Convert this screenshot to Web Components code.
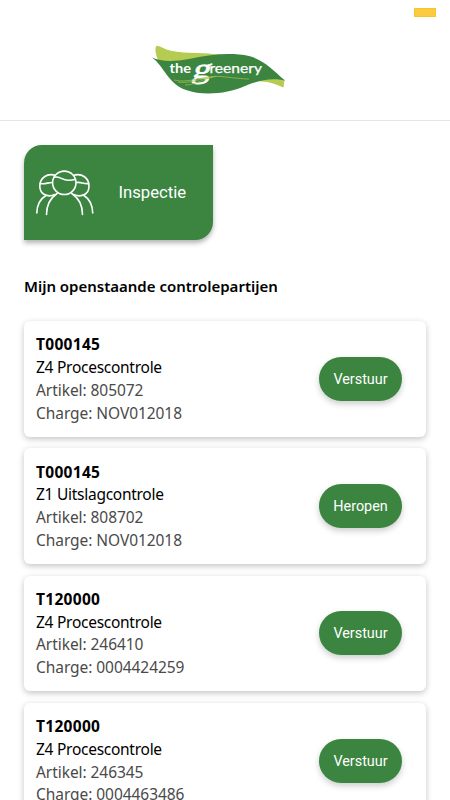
<!DOCTYPE html>
<html lang="nl">
<head>
<meta charset="utf-8">
<meta name="viewport" content="width=device-width, initial-scale=1">
<title>The Greenery</title>
<style>
    html, body {
        margin: 0;
        height: 100%;
        overflow: hidden;
        background: #fff;
        font-family: "Noto Sans", sans-serif;
        --green: #3b8541;
    }
</style>
</head>
<body>
<greenery-app>
    <app-header slot="header"></app-header>
    <menu-tile>Inspectie</menu-tile>
    <section-title>Mijn openstaande controlepartijen</section-title>
    <party-list>
        <party-card code="T000145" artikel="805072" charge="NOV012018" action="Verstuur">Z4 Procescontrole</party-card>
        <party-card code="T000145" artikel="808702" charge="NOV012018" action="Heropen">Z1 Uitslagcontrole</party-card>
        <party-card code="T120000" artikel="246410" charge="0004424259" action="Verstuur">Z4 Procescontrole</party-card>
        <party-card code="T120000" artikel="246345" charge="0004463486" action="Verstuur">Z4 Procescontrole</party-card>
    </party-list>
</greenery-app>

<script>
class GreeneryApp extends HTMLElement {
    connectedCallback() {
        this.attachShadow({ mode: 'open' });
        this.shadowRoot.innerHTML = `
            <style>
                :host {
                    display: block;
                    height: 100%;
                    overflow: hidden;
                }
                main {
                    padding: 24px 24px 0;
                }
            </style>
            <slot name="header"></slot>
            <main><slot></slot></main>
        `;
    }
}

class GreeneryLogo extends HTMLElement {
    connectedCallback() {
        this.attachShadow({ mode: 'open' });
        this.shadowRoot.innerHTML = `
            <style>
                :host {
                    display: block;
                    width: 135px;
                    height: 50px;
                }
                svg {
                    display: block;
                }
                text {
                    fill: #fff;
                    font-family: Lato, sans-serif;
                    font-size: 13px;
                }
                .the {
                    font-weight: 700;
                }
                .g {
                    font-family: "Liberation Serif", serif;
                    font-size: 28px;
                    stroke: #fff;
                    stroke-width: 0.7px;
                }
                .rest {
                    stroke: #fff;
                    stroke-width: 0.25px;
                }
            </style>
            <svg width="135" height="50" viewBox="0 0 135 50">
                <path fill="#b5cb51" d="M5.500 .8C9 .8 12 4 20 5.700C36 9 54 7 70 10L50 20L10 20C5 13 3 3 5.500 .8Z"/>
                <path fill="#b5cb51" d="M95 38C111 34 121 38 132.500 42.500L133.500 35L110 30Z"/>
                <path fill="#3b8541" d="M1 12.500C10 17 24 16.500 38 14C58 9.500 80 7 98 11C113 15 122 25 134 35.500C119 32 107 36 94 41C76 49 52 51 35 45C17 39 13 21 1 12.500Z"/>
                <text class="the" x="18.500" y="28" textLength="21.500" lengthAdjust="spacingAndGlyphs">the</text>
                <text class="g" transform="translate(40.500 33) skewX(-16)" textLength="18" lengthAdjust="spacingAndGlyphs">g</text>
                <text class="rest" x="58.500" y="28" textLength="52.500" lengthAdjust="spacingAndGlyphs">reenery</text>
                <g fill="none" stroke="#a3c34f" stroke-width=".7">
                    <path d="M23 35C37 39 54 30 70 31.500C80 32.500 92 34 98 34"/>
                    <path d="M27 37C40 39 50 33 65 31.500"/>
                    <path d="M34 40C44 40 52 34 62 32"/>
                </g>
            </svg>
        `;
    }
}

class AppHeader extends HTMLElement {
    connectedCallback() {
        this.attachShadow({ mode: 'open' });
        this.shadowRoot.innerHTML = `
            <style>
                :host {
                    display: flex;
                    justify-content: center;
                    position: relative;
                    box-sizing: border-box;
                    height: 121px;
                    padding: 45px 13px 0 0;
                    border-bottom: 1px solid #e6e6e6;
                }
                .badge {
                    position: absolute;
                    top: 8px;
                    right: 14px;
                    box-sizing: border-box;
                    width: 22px;
                    height: 9px;
                    background: #fbcb42;
                    border: 1px solid #f5c529;
                }
            </style>
            <greenery-logo></greenery-logo>
            <span class="badge"></span>
        `;
    }
}

class MenuTile extends HTMLElement {
    connectedCallback() {
        this.attachShadow({ mode: 'open' });
        this.shadowRoot.innerHTML = `
            <style>
                :host {
                    display: flex;
                    align-items: center;
                    box-sizing: border-box;
                    width: 189px;
                    height: 95px;
                    padding: 0 0 1px 11px;
                    border-radius: 18px 0 18px 0;
                    background: var(--green);
                    box-shadow: 0 3px 5px rgba(0,0,0,0.3);
                    color: #fff;
                    font: 16.700px Roboto, sans-serif;
                }
                svg {
                    margin-right: 23.500px;
                }
            </style>
            <svg width="60" height="50" viewBox="0 0 60 50" fill="none" stroke="#fff" stroke-width="1.600" stroke-linecap="round">
                <circle cx="29.300" cy="15.800" r="11.700"/>
                <path d="M19 10.300C24 8.500 27 13.200 33 13.200C36 13.500 38 13 40.300 12.500"/>
                <path d="M20 8.200C12 6 4.800 11 4.800 19C4.800 27 12 31 20 27.500"/>
                <path d="M5.500 16.500C10 17.500 13 15.500 17 15.500"/>
                <path d="M38.800 8.200C47 6 54 11 54 19C54 27 47 31 38.800 27.500"/>
                <path d="M41.500 15.500C46 14.500 49 17.500 53.300 16.500"/>
                <path d="M11 28.500C5 32 2 39 1.800 46M22 26.500C15.500 31 11.500 39 11.500 47.500M36.800 26.500C43.500 31 47.500 39 47.500 47.500M49 28.500C54.500 32 57.500 39 57.700 46"/>
            </svg>
            <slot></slot>
        `;
    }
}

class SectionTitle extends HTMLElement {
    connectedCallback() {
        this.attachShadow({ mode: 'open' });
        this.shadowRoot.innerHTML = `
            <style>
                :host {
                    display: block;
                    margin: 34px 0 23px;
                    color: #000;
                    font-size: 15px;
                    font-weight: 600;
                    line-height: 24px;
                    letter-spacing: -0.01px;
                    white-space: nowrap;
                }
            </style>
            <slot></slot>
        `;
    }
}

class PartyList extends HTMLElement {
    connectedCallback() {
        this.attachShadow({ mode: 'open' });
        this.shadowRoot.innerHTML = `
            <style>
                :host {
                    display: flex;
                    flex-direction: column;
                    gap: 11.700px;
                    padding-top: 0.300px;
                }
            </style>
            <slot></slot>
        `;
    }
}

class PillButton extends HTMLElement {
    connectedCallback() {
        this.attachShadow({ mode: 'open' });
        this.shadowRoot.innerHTML = `
            <style>
                :host {
                    display: block;
                }
                button {
                    display: block;
                    box-sizing: border-box;
                    width: 83px;
                    height: 44px;
                    padding: 1px 0 0;
                    border: 0;
                    border-radius: 22px;
                    background: var(--green);
                    box-shadow: 0 3px 6px rgba(0,0,0,0.2);
                    color: #fff;
                    font: 14.400px Roboto, sans-serif;
                }
            </style>
            <button><slot></slot></button>
        `;
    }
}

class PartyCard extends HTMLElement {
    connectedCallback() {
        this.attachShadow({ mode: 'open' });
        this.shadowRoot.innerHTML = `
            <style>
                :host {
                    display: flex;
                    align-items: center;
                    justify-content: space-between;
                    box-sizing: border-box;
                    flex: none;
                    height: 115.500px;
                    padding: 0 24px 0 12px;
                    border-radius: 6px;
                    background: #fff;
                    box-shadow: 0 2px 6px rgba(0,0,0,0.24);
                    font-size: 15.500px;
                    line-height: 22.800px;
                    white-space: nowrap;
                }
                .code {
                    color: #000;
                    font-weight: 700;
                    letter-spacing: 0.3px;
                }
                .kind {
                    color: #000;
                    letter-spacing: -0.27px;
                }
                .detail {
                    color: #4a4a4a;
                    letter-spacing: -0.06px;
                }
            </style>
            <div>
                <div class="code">${this.getAttribute('code')}</div>
                <div class="kind"><slot></slot></div>
                <div class="detail">Artikel: ${this.getAttribute('artikel')}</div>
                <div class="detail">Charge: ${this.getAttribute('charge')}</div>
            </div>
            <pill-button>${this.getAttribute('action')}</pill-button>
        `;
    }
}

customElements.define('greenery-logo', GreeneryLogo);
customElements.define('app-header', AppHeader);
customElements.define('menu-tile', MenuTile);
customElements.define('section-title', SectionTitle);
customElements.define('pill-button', PillButton);
customElements.define('party-card', PartyCard);
customElements.define('party-list', PartyList);
customElements.define('greenery-app', GreeneryApp);
</script>
</body>
</html>
